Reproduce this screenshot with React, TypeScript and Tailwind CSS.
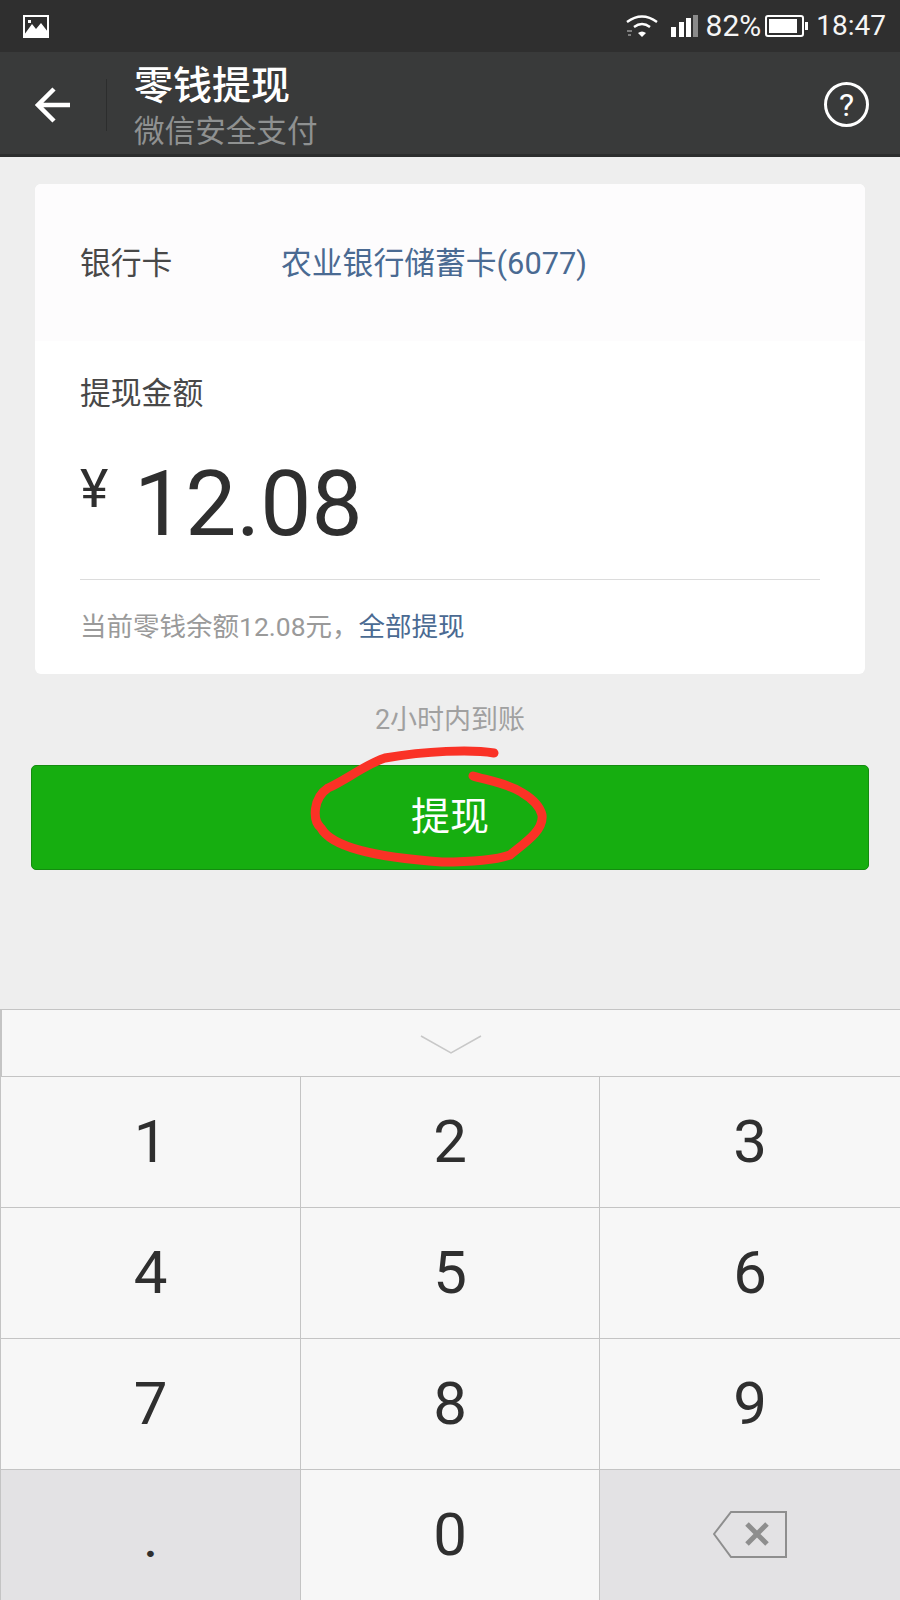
import { FC, ReactNode } from 'react';

const Key: FC<{ children: ReactNode; dark?: boolean; last?: boolean }> = ({ children, dark, last }) => (
  <div
    className={`flex items-center justify-center border-t border-[#c4c4c4] ${last ? '' : 'border-r'} ${
      dark ? 'bg-[#e3e2e4]' : 'bg-[#f7f7f7]'
    }`}
  >
    {children}
  </div>
);

const StatusBar: FC = () => (
  <div className="flex h-[52px] items-center justify-between bg-[#2f2f2f] pl-[23px] pr-[14px] text-[#f5f5f5]">
    <svg width="26" height="23" viewBox="0 0 26 23">
      <rect width="26" height="23" fill="#fff" />
      <rect x="2" y="2" width="22" height="18" fill="#2f2f2f" />
      <path d="M1 20 L9 9 L13 14 L18 8 L25 17 L25 21 L1 21 Z" fill="#fff" />
      <rect x="5" y="5" width="3" height="3" fill="#fff" />
    </svg>
    <div className="flex items-center">
      <svg width="32" height="24" viewBox="0 0 32 24" fill="none" className="mr-[13px]">
        <path d="M1 8 Q16 -3 31 8" stroke="#fff" strokeWidth="2.4" />
        <path d="M8 13 Q16 7 24 13" stroke="#fff" strokeWidth="2.4" />
        <path d="M12 19 L16 23 L20 19 Q16 16 12 19 Z" fill="#fff" />
        <path d="M1 17 H6 M2 21 H5" stroke="#999" strokeWidth="1.6" />
      </svg>
      <svg width="27" height="22" viewBox="0 0 27 22" className="mr-[8px]">
        <rect x="0" y="12" width="5" height="10" fill="#fff" />
        <rect x="8" y="7" width="5" height="15" fill="#fff" />
        <rect x="15" y="3" width="5" height="19" fill="#fff" />
        <rect x="22" y="0" width="5" height="22" fill="#8a8a8a" />
      </svg>
      <span className="mr-[4px] text-[30px] leading-none">82%</span>
      <svg width="43" height="22" viewBox="0 0 43 22" className="mr-[8px]">
        <rect x="1" y="1" width="37" height="20" rx="2" fill="none" stroke="#fff" strokeWidth="2" />
        <rect x="4" y="4" width="28" height="14" fill="#fff" />
        <rect x="40" y="7" width="3" height="8" fill="#fff" />
      </svg>
      <span className="text-[28px] leading-none">18:47</span>
    </div>
  </div>
);

const NavBar: FC = () => (
  <div className="flex h-[105px] items-center border-b-[3px] border-[#2c2d2d] bg-[#393a3a] pt-[3px]">
    <div className="flex w-[106px] items-center justify-center">
      <svg width="36" height="36" viewBox="0 0 36 36" fill="none" stroke="#fff" strokeWidth="4.5">
        <path d="M35 18 H4 M19 2 L3 18 L19 34" />
      </svg>
    </div>
    <div className="h-[52px] w-px bg-[#2c2d2d]" />
    <div className="ml-[27px] flex flex-col pt-[4px]">
      <span className="text-[39px] leading-[46px] font-medium text-white">零钱提现</span>
      <span className="mt-[4px] text-[30.6px] leading-[38px] text-[#8f9191]">微信安全支付</span>
    </div>
    <div className="ml-auto mr-[31px] flex h-[45px] w-[45px] items-center justify-center rounded-full border-[3px] border-white text-[32px] leading-none text-white">
      ?
    </div>
  </div>
);

const Card: FC = () => (
  <div className="mx-[35px] mt-[27px] overflow-hidden rounded-[6px] bg-white">
    <div className="flex h-[157px] items-center bg-[#fdfcfd] px-[45px] pt-[4px] text-[30.8px]">
      <span className="w-[201px] text-[#484848]">银行卡</span>
      <span className="text-[#4a6a92]">农业银行储蓄卡(6077)</span>
    </div>
    <div className="px-[45px]">
      <div className="pt-[33px] text-[30.8px] leading-[40px] text-[#484848]">提现金额</div>
      <div className="flex h-[166px] items-start border-b border-[#dcdcdc]">
        <span className="mt-[47px] w-[54px] text-[54px] leading-[56px] text-[#2f2f2f]">¥</span>
        <span className="mt-[36px] text-[91px] leading-[108px] text-[#2f2f2f]">12.08</span>
      </div>
      <div className="flex h-[94px] items-center text-[26.5px]">
        <span className="text-[#9a9a9a]">当前零钱余额12.08元，</span>
        <span className="text-[#4a6a92]">全部提现</span>
      </div>
    </div>
  </div>
);

const WithdrawButton: FC = () => (
  <div className="relative mx-[31px] mt-[27px] flex h-[105px] items-center justify-center rounded-[5px] border border-[#148c10] bg-[#16ae10] text-[39px] text-white">
    <span>提现</span>
    <svg className="absolute left-0 top-[-31px]" width="838" height="135" viewBox="31 735 838 135" fill="none">
      <path
        d="M493 753 C470 749 425 751 384 758 C365 764 345 780 327 788 C312 798 311 820 320 828 C330 846 370 857 441 862 C470 862 495 860 509 855 C525 842 543 830 541 815 C538 802 525 795 520 792 C505 783 485 780 472 776"
        stroke="#fa3226"
        strokeWidth="9"
        strokeLinecap="round"
      />
    </svg>
  </div>
);

const Keypad: FC = () => (
  <div className="mt-auto">
    <div className="flex h-[67px] justify-center border-t border-l-2 border-[#c4c4c4] bg-[#f7f7f7] pt-[25px]">
      <svg width="62" height="20" viewBox="0 0 62 20" fill="none" stroke="#c8c8c8" strokeWidth="1.5">
        <path d="M1 1 L31 18 L61 1" />
      </svg>
    </div>
    <div className="grid h-[524px] grid-cols-[300px_299px_300px] grid-rows-4 border-l border-[#c4c4c4] text-[60px] text-[#2f2f2f]">
      <Key>1</Key>
      <Key>2</Key>
      <Key last>3</Key>
      <Key>4</Key>
      <Key>5</Key>
      <Key last>6</Key>
      <Key>7</Key>
      <Key>8</Key>
      <Key last>9</Key>
      <Key dark>
        <span className="relative top-[7px] text-[42px] font-bold">.</span>
      </Key>
      <Key>0</Key>
      <Key dark last>
        <svg width="74" height="48" viewBox="0 0 74 48" fill="none">
          <path d="M1 23 L18 1 H73 V46 H18 Z" stroke="#8e8e8e" strokeWidth="2" />
          <path d="M34 13 L54 33 M54 13 L34 33" stroke="#8e8e8e" strokeWidth="5" />
        </svg>
      </Key>
    </div>
  </div>
);

export default function App() {
  return (
    <div
      className="flex h-[1600px] w-[900px] flex-col overflow-hidden bg-[#eeeeee]"
      style={{ fontFamily: 'Roboto, "Noto Sans CJK SC", sans-serif' }}
    >
      <StatusBar />
      <NavBar />
      <Card />
      <div className="mt-[28px] text-center text-[27px] leading-[36px] text-[#a0a0a0]">2小时内到账</div>
      <WithdrawButton />
      <Keypad />
    </div>
  );
}
